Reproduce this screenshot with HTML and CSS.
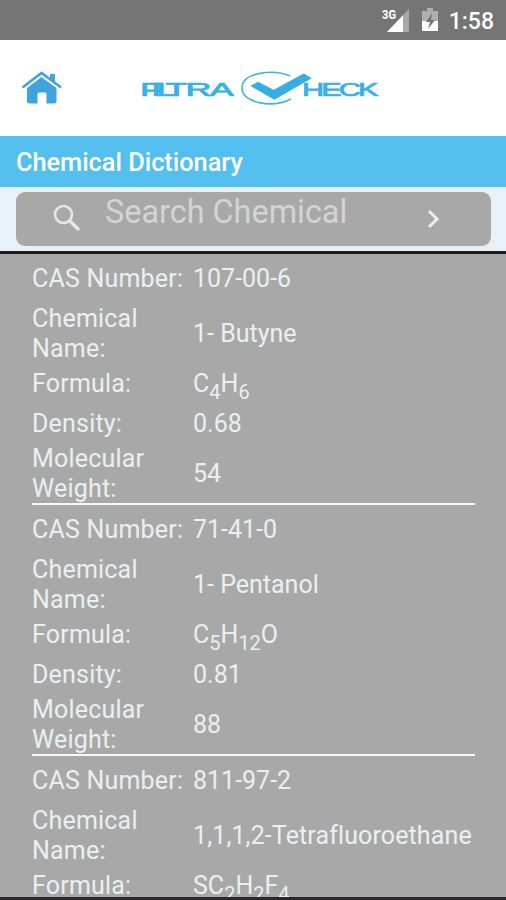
FILE: index.html
```html
<!DOCTYPE html>
<html lang="en">
<head>
<meta charset="utf-8">
<title>Chemical Dictionary</title>
<link rel="stylesheet" href="styles.css">
</head>
<body>
<div class="status">
  <svg class="signal" width="32" height="28" viewBox="0 0 32 28">
    <path d="M28 3V26H6z" fill="#a9a9a9"/>
    <path d="M22 9.300V26H6z" fill="#fff"/>
    <text class="network" x="1" y="13" textLength="14" lengthAdjust="spacingAndGlyphs">3G</text>
  </svg>
  <svg class="battery" width="16" height="24" viewBox="0 0 16 24">
    <path d="M5 0h6v3h5v10H0V3h5z" fill="#b0b0b0"/>
    <path d="M0 13h16v10H0z" fill="#fff"/>
    <path d="M10 5L4 14h4l-2 7 7-9H9z" fill="#757575"/>
  </svg>
  <span class="clock">1:58</span>
</div>
<header class="header">
  <svg class="home" width="42" height="36" viewBox="0 0 42 36">
    <path d="M1.500 17.500L20.500 3 40 17.500" fill="none" stroke="#3fa3df" stroke-width="2.600"/>
    <path d="M29 4h5v9l-5-4z" fill="#3fa3df"/>
    <path d="M6 18L20.500 7 35.500 18V31q0 2.500-2.500 2.500H25.500V24q0-1.500-1.500-1.500H18q-1.500 0-1.500 1.500v9.500H8.500Q6 33.500 6 31z" fill="#3fa3df"/>
  </svg>
  <svg class="logo" width="240" height="40" viewBox="0 0 240 40">
    <text class="logo-text" transform="translate(-1 28) scale(2 1)" x="0 5.600 8.300 12.800 22.800 34.900">FILTRA</text>
    <path d="M149 8C133 1 101 4 101 20s32 20 49 11" fill="none" stroke="#3fb3e8" stroke-width="1.600"/>
    <path d="M111 18L117 14.700 132.700 22.700 162.700 6.300 169.300 10.300 133.300 31z" fill="#35aee6" stroke="#35aee6" stroke-width="1.500"/>
    <text class="logo-text" transform="translate(161 28) scale(1.700 1)" textLength="45" lengthAdjust="spacing">HECK</text>
  </svg>
</header>
<h1 class="title">Chemical Dictionary</h1>
<div class="search">
  <div class="field">
    <svg class="magnifier" width="30" height="30" viewBox="0 0 30 30" fill="none" stroke="#e6e6e6">
      <circle cx="11.500" cy="10.500" r="8.500" stroke-width="2.600"/>
      <path d="M17.500 16.500L27 26" stroke-width="3.600"/>
    </svg>
    <span class="placeholder">Search Chemical</span>
    <svg class="go" width="14" height="20" viewBox="0 0 14 20" fill="none" stroke="#eee" stroke-width="3">
      <path d="M2 2L10 10 2 18"/>
    </svg>
  </div>
</div>
<main class="list">
  <dl class="card">
    <dt>CAS Number:</dt><dd>107-00-6</dd>
    <dt>Chemical Name:</dt><dd>1- Butyne</dd>
    <dt>Formula:</dt><dd>C<sub>4</sub>H<sub>6</sub></dd>
    <dt>Density:</dt><dd>0.68</dd>
    <dt>Molecular Weight:</dt><dd>54</dd>
  </dl>
  <dl class="card">
    <dt>CAS Number:</dt><dd>71-41-0</dd>
    <dt>Chemical Name:</dt><dd>1- Pentanol</dd>
    <dt>Formula:</dt><dd>C<sub>5</sub>H<sub>12</sub>O</dd>
    <dt>Density:</dt><dd>0.81</dd>
    <dt>Molecular Weight:</dt><dd>88</dd>
  </dl>
  <dl class="card card-last">
    <dt>CAS Number:</dt><dd>811-97-2</dd>
    <dt>Chemical Name:</dt><dd class="long">1,1,1,2-Tetrafluoroethane</dd>
    <dt>Formula:</dt><dd>SC<sub>2</sub>H<sub>2</sub>F<sub>4</sub></dd>
  </dl>
</main>
</body>
</html>
```
FILE: styles.css
```css
* { box-sizing: border-box; }
body {
  margin: 0;
  height: 900px;
  display: flex;
  flex-direction: column;
  overflow: hidden;
  font-family: Roboto, "Liberation Sans", sans-serif;
  background: #fff;
}
.status {
  flex: none;
  height: 40px;
  background: #757575;
  display: flex;
  align-items: flex-start;
  padding: 6px 12px 0 0;
  justify-content: flex-end;
  color: #fff;
}
.network { font: bold 12px Roboto, sans-serif; fill: #fff; }
.signal { margin-right: 9px; }
.battery { margin: 2px 11px 0 0; }
.clock { font-size: 23px; font-weight: 500; line-height: 32px; }
.header {
  flex: none;
  height: 96px;
  display: flex;
  align-items: flex-start;
  padding: 28px 0 0 21px;
}
.home { margin-top: 2px; }
.logo { margin-left: 78px; }
.logo-text {
  font: 18px "Liberation Sans", sans-serif;
  fill: #38b1e7;
  stroke: #38b1e7;
  stroke-width: 0.7px;
}
.title {
  flex: none;
  margin: 0;
  height: 51px;
  padding-left: 16px;
  background: #52bfef;
  color: #fff;
  font-size: 25.3px;
  font-weight: 500;
  line-height: 53px;
}
.search {
  flex: none;
  height: 67px;
  padding: 5px 15px 0 16px;
  background: #e8f1f7;
  border-bottom: 3px solid #1c1c1c;
}
.field {
  height: 54px;
  display: flex;
  align-items: flex-start;
  background: #a8a8a8;
  border-radius: 9px;
}
.magnifier { margin: 12px 0 0 36px; }
.placeholder {
  width: 310px;
  padding-left: 23px;
  color: #d4d4d4;
  font-size: 32.4px;
  line-height: 40px;
  white-space: nowrap;
}
.go { margin: 17px 0 0 35px; }
.list {
  flex: 1;
  min-height: 0;
  overflow: hidden;
  padding: 0 31px 0 32px;
  background: #a8a8a8;
  border-bottom: 3px solid #2b272b;
}
.card {
  margin: 0;
  display: grid;
  grid-template-columns: 161px 1fr;
  grid-template-rows: 50px 60px 40px 40px 59px;
  align-items: center;
  border-bottom: 2px solid #f8f8f8;
  color: #eaf0f2;
  font-size: 25px;
  line-height: 30px;
}
.card-last { border-bottom: 0; }
dt { padding-right: 8px; letter-spacing: 0.2px; }
dt, dd { margin: 0; }
dd { white-space: nowrap; }
.long { letter-spacing: 0.12px; }
sub { font-size: 20px; line-height: 0; vertical-align: -7px; }
```
